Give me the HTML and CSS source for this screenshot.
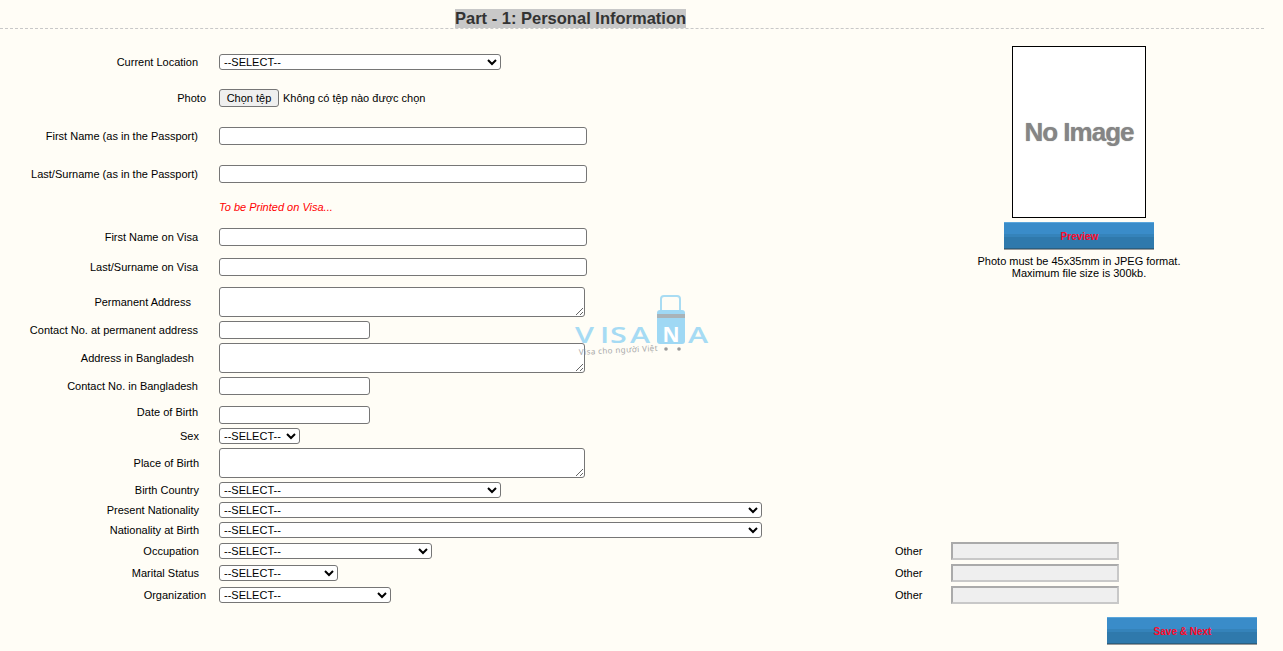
FILE: index.html
```html
<!DOCTYPE html>
<html lang="vi">
<head>
    <meta charset="UTF-8">
    <meta name="viewport" content="width=device-width, initial-scale=1.0">
    <title>Part - 1: Personal Information</title>
    <link rel="stylesheet" href="styles.css">
</head>
<body>
<div class="page">
    <div class="header">
        <h1>Part - 1: Personal Information</h1>
    </div>

    <div class="top">
        <div class="top-left">
            <div class="row first">
                <label>Current Location</label>
                <select class="w-282"><option>--SELECT--</option></select>
            </div>
            <div class="row g19">
                <label class="pad-13">Photo</label>
                <button type="button" class="file-btn">Chọn tệp</button>
                <span class="file-name">Không có tệp nào được chọn</span>
            </div>
            <div class="row g20">
                <label>First Name (as in the Passport)</label>
                <input type="text" class="w-368">
            </div>
            <div class="row g20">
                <label>Last/Surname (as in the Passport)</label>
                <input type="text" class="w-368">
            </div>
            <div class="row g17">
                <label></label>
                <span class="note">To be Printed on Visa...</span>
            </div>
            <div class="row g14">
                <label>First Name on Visa</label>
                <input type="text" class="w-368">
            </div>
            <div class="row g12">
                <label>Last/Surname on Visa</label>
                <input type="text" class="w-368">
            </div>
        </div>

        <div class="side">
            <div class="photo"><span>No Image</span></div>
            <button type="button" class="blue-btn">Preview</button>
            <p class="hint">Photo must be 45x35mm in JPEG format.<br>Maximum file size is 300kb.</p>
        </div>
    </div>

    <div class="row g7">
        <label class="pad-28">Permanent Address</label>
        <textarea></textarea>
    </div>
    <div class="row">
        <label>Contact No. at permanent address</label>
        <input type="text" class="w-151">
    </div>
    <div class="row">
        <label class="pad-25">Address in Bangladesh</label>
        <textarea></textarea>
    </div>
    <div class="row">
        <label>Contact No. in Bangladesh</label>
        <input type="text" class="w-151">
    </div>
    <div class="row g11">
        <label class="raised">Date of Birth</label>
        <input type="text" class="w-151">
    </div>
    <div class="row">
        <label class="pad-20">Sex</label>
        <select class="w-81"><option>--SELECT--</option></select>
    </div>
    <div class="row">
        <label class="pad-20">Place of Birth</label>
        <textarea></textarea>
    </div>
    <div class="row">
        <label class="pad-20">Birth Country</label>
        <select class="w-282"><option>--SELECT--</option></select>
    </div>
    <div class="row">
        <label class="pad-20">Present Nationality</label>
        <select class="w-543"><option>--SELECT--</option></select>
    </div>
    <div class="row">
        <label class="pad-20">Nationality at Birth</label>
        <select class="w-543"><option>--SELECT--</option></select>
    </div>
    <div class="row other-row">
        <label class="pad-20">Occupation</label>
        <div class="field"><select class="w-213"><option>--SELECT--</option></select></div>
        <span class="other-label">Other</span>
        <input type="text" class="other" disabled>
    </div>
    <div class="row other-row">
        <label class="pad-20">Marital Status</label>
        <div class="field"><select class="w-119"><option>--SELECT--</option></select></div>
        <span class="other-label">Other</span>
        <input type="text" class="other" disabled>
    </div>
    <div class="row other-row">
        <label class="pad-13">Organization</label>
        <div class="field"><select class="w-172"><option>--SELECT--</option></select></div>
        <span class="other-label">Other</span>
        <input type="text" class="other" disabled>
    </div>

    <div class="save-row">
        <button type="button" class="blue-btn">Save &amp; Next</button>
    </div>

    <!-- watermark -->
    <svg class="watermark" width="138" height="66" viewBox="0 0 138 66">
        <path d="M88 17V5q0-3 3-3h13q3 0 3 3v12" fill="none" stroke="#a9dcf3" stroke-width="2"/>
        <rect x="84" y="16" width="28" height="34" rx="3" fill="#9fd8f4"/>
        <rect x="84" y="20" width="28" height="4" fill="#a9b3b8"/>
        <circle cx="93" cy="55" r="1.8" fill="#9a9a9a"/>
        <circle cx="106" cy="55" r="1.8" fill="#9a9a9a"/>
        <text class="wm-big" transform="scale(1.45 1)" x="1.4 18.6 25.5 39.3" y="49">VISA</text>
        <text class="wm-n" x="98" y="48" text-anchor="middle">N</text>
        <text class="wm-big" transform="scale(1.45 1)" x="79.3" y="49">A</text>
        <text class="wm-small" x="6" y="61" transform="rotate(-3 6 61)">Visa cho người Việt</text>
    </svg>
</div>
</body>
</html>
```

FILE: styles.css
```css
html, body {
    margin: 0;
    padding: 0;
    background: #fffdf6;
    overflow: hidden;
}

body {
    font-family: "Liberation Sans", Arial, sans-serif;
    font-size: 11px;
    color: #000;
}

.page {
    position: relative;
    width: 1264px;
    height: 651px;
}

.header {
    height: 28px;
    border-bottom: 1px dashed #c8c8c8;
    padding-left: 455px;
}

h1 {
    display: inline-block;
    margin: 9px 0 0;
    height: 19px;
    line-height: 19px;
    font-size: 16.5px;
    font-weight: bold;
    color: #333;
    background: #c8c8c8;
}

.top {
    display: flex;
    justify-content: space-between;
    height: 251px;
}

.row {
    display: flex;
    align-items: center;
    margin-top: 4px;
}

.row.first { margin-top: 25px; }
.row.g7 { margin-top: 7px; }
.row.g11 { margin-top: 11px; }
.row.g12 { margin-top: 12px; }
.row.g14 { margin-top: 14px; }
.row.g17 { margin-top: 17px; }
.row.g19 { margin-top: 19px; }
.row.g20 { margin-top: 20px; }

label {
    width: 198px;
    margin-right: 21px;
    flex: none;
    text-align: right;
}

label.pad-13 { width: 206px; margin-right: 13px; }
label.pad-20 { width: 199px; margin-right: 20px; }
label.pad-25 { width: 194px; margin-right: 25px; }
label.pad-28 { width: 191px; margin-right: 28px; }
label.raised { position: relative; top: -3px; }

select, input, textarea, .file-btn {
    font-family: "Liberation Sans", Arial, sans-serif;
    box-sizing: border-box;
}

select {
    height: 16px;
    padding: 0;
    font-size: 11px;
    background: #fff;
    border: 1px solid #767676;
    border-radius: 3px;
}

input {
    height: 18px;
    padding: 1px 2px;
    font-size: 11px;
    background: #fff;
    border: 1px solid #767676;
    border-radius: 3px;
}

textarea {
    display: block;
    width: 366px;
    height: 30px;
    margin: 0;
    padding: 2px;
    font-size: 11px;
    background: #fff;
    border: 1px solid #767676;
    border-radius: 3px;
}

.w-81 { width: 81px; }
.w-119 { width: 119px; }
.w-151 { width: 151px; }
.w-172 { width: 172px; }
.w-213 { width: 213px; }
.w-282 { width: 282px; }
.w-368 { width: 368px; }
.w-543 { width: 543px; }

.file-btn {
    width: 60px;
    height: 18px;
    padding: 0;
    font-size: 11px;
    background: #efefef;
    border: 1px solid #767676;
    border-radius: 3px;
}

.file-name {
    margin-left: 4px;
    font-size: 11px;
}

.note {
    height: 14px;
    line-height: 14px;
    color: #f00;
    font-style: italic;
}

.side {
    width: 300px;
    margin-right: 35px;
    padding-top: 17px;
    display: flex;
    flex-direction: column;
    align-items: center;
}

.photo {
    width: 134px;
    height: 172px;
    box-sizing: border-box;
    display: flex;
    align-items: center;
    justify-content: center;
    background: #fff;
    border: 1px solid #000;
}

.photo span {
    font-size: 26px;
    font-weight: bold;
    letter-spacing: -1px;
    color: #858585;
    text-shadow: 0 0 1px #a0a0a0;
}

.blue-btn {
    display: block;
    width: 150px;
    height: 28px;
    padding: 0 0 0 1px;
    font-family: "Liberation Sans", Arial, sans-serif;
    font-size: 10px;
    font-weight: bold;
    color: #ff0a2a;
    background: linear-gradient(to bottom,
        #5aa6dc 0, #5aa6dc 1px,
        #3a8cc9 1px, #3a8cc9 12px,
        #3583ba 12px, #3583ba 15px,
        #2f79ac 15px, #2f79ac 26px,
        #2b5f80 26px, #2b5f80 27px,
        #9a9a9a 27px);
    border: none;
}

.side .blue-btn { margin-top: 4px; }

.hint {
    margin: 5px 0 0;
    line-height: 12px;
    text-align: center;
    font-size: 11px;
}

.other-row .field {
    width: 676px;
    flex: none;
}

.other-row select {
    display: block;
}

.other-label {
    width: 56px;
    flex: none;
}

.other {
    width: 168px;
    background: #efefef;
    border: 2px solid;
    border-color: #aaa #c8c8c8 #c8c8c8 #aaa;
    border-radius: 0;
}

.save-row {
    display: flex;
    justify-content: flex-end;
    margin-top: 13px;
    padding-right: 7px;
}

.watermark {
    position: absolute;
    left: 573px;
    top: 294px;
    pointer-events: none;
}

.wm-big {
    font-family: "Open Sans", "Noto Sans", sans-serif;
    font-size: 21px;
    font-weight: 600;
    fill: #a6dbf4;
}

.wm-n {
    font-family: "Open Sans", "Noto Sans", sans-serif;
    font-size: 21px;
    font-weight: bold;
    fill: #fff;
}

.wm-small {
    font-family: "Noto Sans", sans-serif;
    font-size: 8px;
    fill: #a8a8a8;
    letter-spacing: 0.4px;
}
```
